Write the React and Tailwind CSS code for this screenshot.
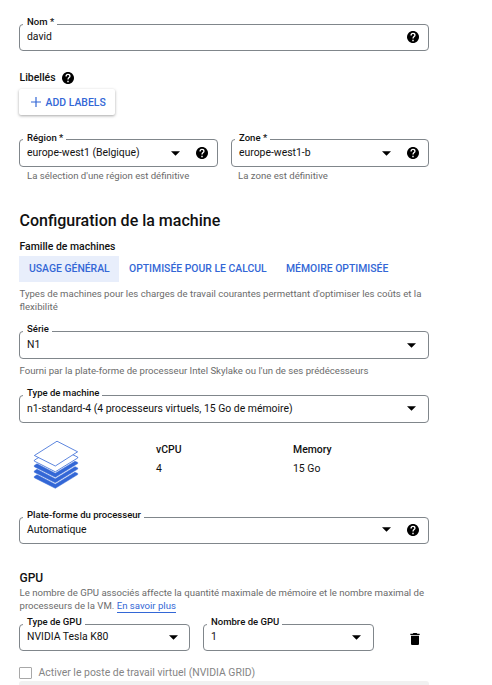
const HELP =
  "M12 2C6.480 2 2 6.480 2 12s4.480 10 10 10 10-4.480 10-10S17.520 2 12 2z";

function Help() {
  return (
    <svg viewBox="2 2 20 20" className="h-3 w-3 shrink-0" fill="none">
      <path d={HELP} fill="#000" />
      <path d="M8.800 9.300C8.800 7.200 10.200 6 12 6s3.200 1.200 3.200 2.900c0 2.300-3.200 2.700-3.200 5.600" stroke="#fff" strokeWidth="2.200" />
      <path d="M10.800 16.500h2.400v2.400h-2.400z" fill="#fff" />
    </svg>
  );
}

function Caret() {
  return (
    <svg viewBox="0 0 9 5" className="h-[5px] w-[9px] shrink-0">
      <path d="M0 0.2h9L4.5 4.8z" />
    </svg>
  );
}

function Trash() {
  return (
    <svg viewBox="5 3 14 18" className="h-3 w-[10px] shrink-0">
      <path d="M6 19c0 1.1.9 2 2 2h8c1.1 0 2-.9 2-2V7H6v12zM19 4h-3.5l-1-1h-5l-1 1H5v2h14V4z" />
    </svg>
  );
}

function Stack() {
  return (
    <svg viewBox="0 0 46 50" className="h-[50px] w-[46px]" fill="none" stroke="#3367d6" strokeLinejoin="round">
      <g fill="#3367d6" strokeWidth="0.5">
        <path d="M4 34.800L1.300 36.500v1.200L22.300 48.300 44.700 34.600v-1.200L42 32.200 22.300 44.200z" />
        <path d="M4 29.300L1.300 31v1.200L22.300 42.800 44.700 29.100v-1.200L42 26.700 22.300 38.700z" />
        <path d="M4 23.800L1.300 25.500v1.200L22.300 37.300 44.700 23.600v-1.200L42 21.200 22.300 33.200z" />
      </g>
      <g fill="#fff" strokeWidth="0.8">
        <path d="M4 18.500L1.300 20.300v.8L22.300 31.800 44.700 18v-1L42 15.800 24 7z" />
        <path d="M1.400 15.500L24 1.200l20.600 10.600L22.300 26z" />
      </g>
    </svg>
  );
}

function Field({ label, value, caret, help, labelTop = "-top-[9px]", className = "" }) {
  return (
    <div className={`relative flex items-center rounded-[4px] border border-[#80868b] pl-[7px] ${className}`}>
      <span
        className={`absolute left-[3px] bg-white pl-1 pr-[3px] text-[9.55px] leading-[12px] font-medium whitespace-nowrap ${labelTop}`}
      >
        {label}
      </span>
      <span className="flex-1 text-[10.42px] leading-[14px] whitespace-nowrap">{value}</span>
      {caret && <Caret />}
      {help && <span className="ml-4"><Help /></span>}
    </div>
  );
}

export default function App() {
  return (
    <main className="h-[685px] w-[492px] overflow-hidden bg-white pt-6 pl-[19px] font-['Roboto',sans-serif] text-[#111]">
      <div className="flex w-[410px] flex-col">
        <Field label="Nom *" value="david" help className="h-[27px] pr-[9px] pb-[2px]" />

        <div className="mt-[19px] flex h-4 items-center gap-[6px] pl-[0.5px] text-[10.45px] font-medium">
          <span>Libellés</span> <Help />
        </div>
        <button className="mt-[3px] flex h-[26px] w-24 items-center rounded-[2px] pl-3 text-[10.45px] font-medium whitespace-nowrap text-[#3367d6] shadow-[0_1px_3px_rgba(0,0,0,0.35)]">
          <svg viewBox="0 0 10 10" className="mr-[4.5px] h-[10px] w-[10px]" stroke="#3367d6" strokeWidth="1.2">
            <path d="M5 0v10M0 5h10" />
          </svg>
          <span className="pt-px">ADD LABELS</span>
        </button>

        <div className="mt-6 flex justify-between text-[9.6px] leading-[12px] text-[#6b6b6b]">
          <div className="w-[199px]">
            <Field
              label="Région *"
              value="europe-west1 (Belgique)"
              caret
              help
              labelTop="-top-[8px]"
              className="h-7 pr-[9px] text-[#111]"
            />
            <p className="mt-[3px] pl-2">La sélection d'une région est définitive</p>
          </div>
          <div className="w-[198px]">
            <Field
              label="Zone *"
              value="europe-west1-b"
              caret
              help
              labelTop="-top-[8px]"
              className="h-7 pr-[9px] text-[#111]"
            />
            <p className="mt-[3px] pl-[7px]">La zone est définitive</p>
          </div>
        </div>

        <h1 className="mt-[29px] h-5 pl-[0.5px] text-[16px] leading-5 font-medium whitespace-nowrap">
          Configuration de la machine
        </h1>
        <h2 className="mt-[9px] h-[14px] pl-[0.5px] text-[10.45px] leading-[14px] font-medium">Famille de machines</h2>
        <div className="mt-[2px] flex h-[26px] text-[10.4px] font-medium whitespace-nowrap text-[#3367d6]">
          <div className="flex w-[100px] items-center bg-[#e8eefb] pl-[10px]">USAGE GÉNÉRAL</div>
          <div className="flex w-[157px] items-center pl-[10px]">OPTIMISÉE POUR LE CALCUL</div>
          <div className="flex items-center pl-[10px]">MÉMOIRE OPTIMISÉE</div>
        </div>
        <p className="mt-[5px] pl-[0.5px] text-[9.6px] leading-[13px] whitespace-nowrap text-[#6b6b6b]">
          Types de machines pour les charges de travail courantes permettant d'optimiser les coûts et la
          <br />
          flexibilité
        </p>

        <Field label="Série" value="N1" caret className="mt-[18px] h-7 pr-3" />
        <p className="mt-[6px] h-3 pl-[0.5px] text-[9.6px] leading-3 whitespace-nowrap text-[#6b6b6b]">
          Fourni par la plate-forme de processeur Intel Skylake ou l'un de ses prédécesseurs
        </p>
        <Field
          label="Type de machine"
          value="n1-standard-4 (4 processeurs virtuels, 15 Go de mémoire)"
          caret
          className="mt-[18px] h-7 pr-3 pb-px"
        />

        <div className="mt-[17px] flex h-[50px] pl-[14px] text-[10.45px]">
          <Stack />
          <dl className="ml-[77px] w-[137px] pt-[3px] leading-[14px]">
            <dt className="font-medium">vCPU</dt>
            <dd className="mt-[5px]">4</dd>
          </dl>
          <dl className="pt-[3px] leading-[14px]">
            <dt className="font-medium">Memory</dt>
            <dd className="mt-[5px]">15 Go</dd>
          </dl>
        </div>

        <Field
          label="Plate-forme du processeur"
          value="Automatique"
          caret
          help
          className="mt-[27px] h-[27px] pr-[9px] pb-[2px]"
        />

        <h2 className="mt-[26px] h-4 pl-[0.5px] text-[12px] leading-4 font-medium">GPU</h2>
        <p className="pl-[0.5px] text-[9.6px] leading-[13px] whitespace-nowrap text-[#6b6b6b]">
          Le nombre de GPU associés affecte la quantité maximale de mémoire et le nombre maximal de
          <br />
          processeurs de la VM.{" "}
          <a className="border-b border-[#3367d6] pb-px text-[#3367d6]">En savoir plus</a>
        </p>
        <div className="mt-[12px] flex items-center">
          <Field label="Type de GPU" value="NVIDIA Tesla K80" caret className="h-[27px] w-[171px] pr-[11px] pb-px" />
          <Field label="Nombre de GPU" value="1" caret className="ml-[13px] h-[27px] w-[171px] pr-3 pb-px" />
          <span className="mt-[3px] ml-[36px]"><Trash /></span>
        </div>

        <label className="mt-[15px] flex h-[14px] items-center text-[10.45px] whitespace-nowrap text-[#858585]">
          <span className="mr-[6.5px] h-3 w-[13px] rounded-[1px] border border-[#a8a8a8]" />
          Activer le poste de travail virtuel (NVIDIA GRID)
        </label>
        <div className="mt-px h-[10px] rounded-t-[3px] bg-[#f1f1f1]" />
      </div>
    </main>
  );
}
